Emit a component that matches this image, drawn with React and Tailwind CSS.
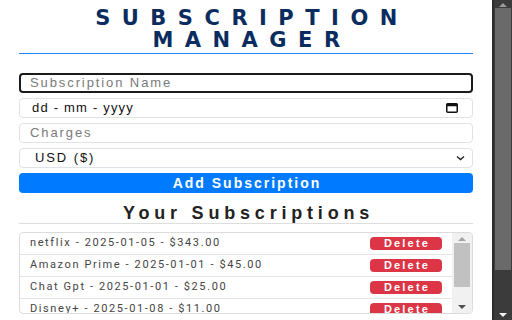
import React from "react";

const subs = [
  { name: "netflix", date: "2025-01-05", amount: "343.00" },
  { name: "Amazon Prime", date: "2025-01-01", amount: "45.00" },
  { name: "Chat Gpt", date: "2025-01-01", amount: "25.00" },
  { name: "Disney+", date: "2025-01-08", amount: "11.00" },
];

const CalendarIcon = () => (
  <svg width="12" height="10" viewBox="0 0 12 10">
    <rect x="0.75" y="0.75" width="10.5" height="8.5" rx="1" fill="none" stroke="#111" strokeWidth="1.5" />
    <rect x="0.75" y="0.75" width="10.5" height="2.5" fill="#111" />
  </svg>
);

const Chevron = ({ color = "#222" }) => (
  <svg width="9" height="6" viewBox="0 0 9 6">
    <polyline points="1,1.5 4.5,4.5 8,1.5" fill="none" stroke={color} strokeWidth="1.4" />
  </svg>
);

const App = () => {
  return (
    <div className="flex h-[320px] w-[512px] overflow-hidden bg-white font-['Liberation_Sans',Arial,sans-serif]">
      {/* page */}
      <div className="w-[492px] px-[19px] pt-[7px]">
        <h1 className="pl-[12px] text-center font-['DejaVu_Sans',sans-serif] text-[21px] font-bold leading-[22px] tracking-[11.5px] text-[#0b2c5f]">
          SUBSCRIPTION
          <br />
          MANAGER
        </h1>
        <div className="mt-[2px] h-[1px] bg-[#1e87ff]"></div>

        {/* form */}
        <div className="mt-[19px] flex flex-col gap-[5px] text-[13px] tracking-[1.9px]">
          <div className="flex h-[20px] items-center rounded-[4px] border-2 border-[#1b1b1b] pl-[9px] text-[#7a7a7a]">
            Subscription Name
          </div>
          <div className="flex h-[20px] items-center justify-between rounded-[4px] border border-[#dfe3e7] pl-[12px] pr-[14px] text-[#111]">
            <span className="tracking-[1.2px]">dd - mm - yyyy</span>
            <CalendarIcon />
          </div>
          <div className="flex h-[20px] items-center rounded-[4px] border border-[#dfe3e7] pl-[10px] text-[#7a7a7a]">
            Charges
          </div>
          <div className="flex h-[20px] items-center justify-between rounded-[4px] border border-[#dfe3e7] pl-[15px] pr-[7px] text-[#111]">
            <span>USD ($)</span>
            <Chevron />
          </div>
          <button className="flex h-[20px] items-center justify-center rounded-[4px] bg-[#007bff] pl-[2px] text-[14px] font-bold tracking-[2px] text-white">
            Add Subscription
          </button>
        </div>

        <h2 className="mt-[11px] border-b border-[#dedede] pl-[5px] text-center text-[18px] font-bold leading-[19px] tracking-[4.8px] text-[#222]">
          Your Subscriptions
        </h2>

        {/* list */}
        <div className="mt-[8px] flex h-[82px] overflow-hidden rounded-[4px] border border-[#dcdcdc]">
          <div className="flex-1">
            {subs.map((s) => (
              <div
                key={s.name}
                className="flex h-[22px] items-center justify-between border-b border-[#e4e4e4] pl-[10px] pr-[10px]"
              >
                <span className="font-['Roboto',sans-serif] text-[11px] tracking-[1.6px] text-[#444]">
                  {s.name} - {s.date} - ${s.amount}
                </span>
                <button className="flex h-[13px] w-[72px] items-center justify-center rounded-[4px] bg-[#dc3545] pl-[2px] text-[11px] font-bold leading-none tracking-[2.2px] text-white">
                  Delete
                </button>
              </div>
            ))}
          </div>
          <div className="flex w-[20px] flex-col items-center bg-[#f1f1f1] pb-[3px] pt-[3px]">
            <svg width="8" height="5" viewBox="0 0 8 5">
              <polygon points="0,5 4,1 8,5" fill="#a3a3a3" />
            </svg>
            <div className="mt-[2px] h-[44px] w-[16px] bg-[#c1c1c1]"></div>
            <div className="flex-1"></div>
            <svg width="8" height="5" viewBox="0 0 8 5">
              <polygon points="0,0 8,0 4,4" fill="#505050" />
            </svg>
          </div>
        </div>
      </div>

      {/* window scrollbar */}
      <div className="flex w-[20px] flex-col items-center border-l-2 border-[#2e2e2e] bg-[#3b3b3b] pb-[2px] pt-[2px]">
        <svg width="8" height="5" viewBox="0 0 8 5">
          <polygon points="0,5 4,1 8,5" fill="#9a9a9a" />
        </svg>
        <div className="mt-[1px] h-[262px] w-[16px] bg-[#6a6a6a]"></div>
        <div className="flex-1"></div>
        <svg width="8" height="5" viewBox="0 0 8 5">
          <polygon points="0,0 8,0 4,4" fill="#f0f0f0" />
        </svg>
      </div>
    </div>
  );
};

export default App;
